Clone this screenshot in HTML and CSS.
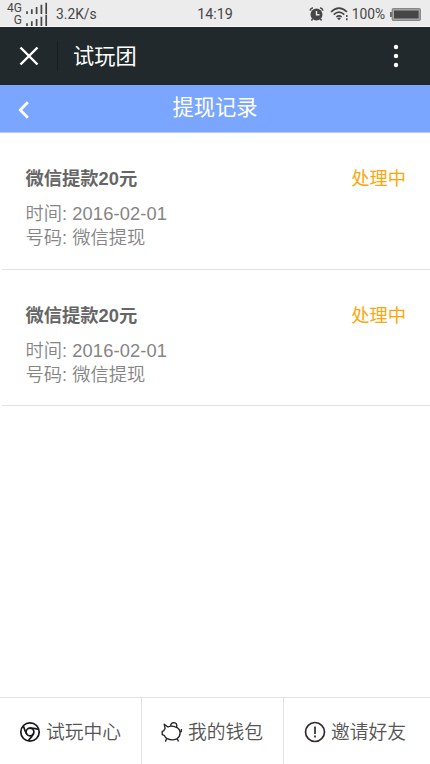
FILE: index.html
```html
<!DOCTYPE html>
<html lang="zh-CN">
<head>
<meta charset="utf-8">
<title>提现记录</title>
<link rel="stylesheet" href="styles.css">
</head>
<body>
<div class="screen">
  <div class="status">
    <div class="status-left">
      <div class="networks">
        <div class="network"><span>4G</span><svg width="22" height="12" viewBox="0 0 22 12"><path d="M1 12V9.2M5.8 12V7.2M10.6 12V5M15.4 12V2.8M20.2 12V.8"/></svg></div>
        <div class="network"><span>G</span><svg width="22" height="12" viewBox="0 0 22 12"><path d="M1 12V9.2M5.8 12V7.2M10.6 12V5M15.4 12V2.8M20.2 12V.8"/></svg></div>
      </div>
      <span class="speed">3.2K/s</span>
    </div>
    <span class="clock">14:19</span>
    <div class="status-right">
      <svg class="alarm" width="15" height="14" viewBox="0 0 15 14"><circle cx="7.5" cy="7.4" r="6" fill="#464646"/><path d="M1 3.6Q1.5 1.4 3.9.8M14 3.6Q13.5 1.4 11.1.8M3.6 12L2.4 13.5M11.4 12l1.2 1.5" fill="none" stroke="#464646" stroke-width="1.5"/><path d="M7.5 4v3.8h3" fill="none" stroke="#ececec" stroke-width="1.4"/></svg>
      <svg class="wifi" width="19" height="14" viewBox="0 0 19 14"><g fill="none" stroke="#464646" stroke-width="1.6"><path d="M1 5Q9 -2.7 17 5"/><path d="M3.7 7.6Q9 2.5 14.3 7.6"/><path d="M6.3 10Q9 7.6 11.7 10"/></g><path d="M7 11.1Q9 9.8 11 11.1L9 13.3z" fill="#464646"/><path d="M16.8 8v2M16.8 11.2v2" stroke="#464646" stroke-width="1.5"/></svg>
      <span class="percent">100%</span>
      <svg class="battery" width="31" height="13" viewBox="0 0 31 13"><rect x="0" y="4" width="2" height="5" fill="#666"/><rect x="2.3" y=".7" width="28" height="11.6" rx="1.2" fill="#aaa" stroke="#888" stroke-width="1.3"/><rect x="4" y="2.5" width="24.6" height="8" fill="#464646"/></svg>
    </div>
  </div>
  <header class="appbar">
    <svg class="close" width="20" height="20" viewBox="0 0 20 20"><path d="M1.5 1.5l17 17M18.5 1.5l-17 17"/></svg>
    <i class="divider"></i>
    <span class="app-name">试玩团</span>
    <svg class="more" width="6" height="24" viewBox="0 0 6 24"><circle cx="3" cy="3" r="2.2"/><circle cx="3" cy="12" r="2.2"/><circle cx="3" cy="21" r="2.2"/></svg>
  </header>
  <div class="pagebar">
    <svg class="back" width="12" height="18" viewBox="0 0 12 18"><path d="M9.8 1.3L2.3 9l7.5 7.7"/></svg>
    <h1>提现记录</h1>
  </div>
  <main class="records">
    <section class="record">
      <div class="record-head"><h2>微信提款20元</h2><span class="state">处理中</span></div>
      <p>时间: <span class="date">2016-02-01</span></p>
      <p>号码: 微信提现</p>
    </section>
    <section class="record">
      <div class="record-head"><h2>微信提款20元</h2><span class="state">处理中</span></div>
      <p>时间: <span class="date">2016-02-01</span></p>
      <p>号码: 微信提现</p>
    </section>
  </main>
  <nav class="tabs">
    <a class="tab"><svg width="22" height="22" viewBox="0 0 22 22" fill="none" stroke="#161616" stroke-width="1.7"><circle cx="11" cy="11" r="9.2"/><circle cx="11" cy="11" r="3.9"/><path d="M10.5 7.1Q15 7.1 19.2 8.2"/><path d="M10.5 7.1Q15 7.1 19.2 8.2" transform="rotate(120 11 11)"/><path d="M10.5 7.1Q15 7.1 19.2 8.2" transform="rotate(240 11 11)"/></svg><span>试玩中心</span></a>
    <a class="tab"><svg width="22" height="22" viewBox="0 0 22 22" fill="none" stroke="#252525" stroke-width="1.35" stroke-linejoin="round"><path d="M10 5.2Q8.5 5.3 7 6L3.2 3.2L4.1 7.4Q3.2 8.6 2.8 9.9L1.2 10.4V13.6L3.2 14.3Q4 16.3 6.2 17.7Q11 19.9 15.8 17.8Q19.1 15.7 19.1 12Q18.9 8 15.4 6.2M9.8 5.2Q12.3 5 15.4 6.3M9.7 5.1Q9.7 1.6 13 1.6Q16.4 1.8 15.7 6.2M19 11.4Q20.8 10.5 20.5 8M5.8 17.3L4.3 20.6M16.2 17.4L17.5 20.6"/></svg><span>我的钱包</span></a>
    <a class="tab"><svg width="22" height="22" viewBox="0 0 22 22" fill="none" stroke="#332b2b" stroke-width="1.7"><circle cx="11" cy="11" r="9.5"/><path d="M11 5.5v7.4M11 14.5v2"/></svg><span>邀请好友</span></a>
  </nav>
</div>
</body>
</html>
```
FILE: styles.css
```css
* { box-sizing: border-box; }
body { margin: 0; background: #fff; font-family: "Liberation Sans", "Noto Sans CJK SC", sans-serif; }
h1, h2, p { margin: 0; font-weight: inherit; }
svg { display: block; flex: none; }
.screen { width: 430px; height: 764px; display: flex; flex-direction: column; overflow: hidden; }

.status { height: 27px; flex: none; display: grid; grid-template-columns: 1fr auto 1fr; align-items: center; background: #ececec; color: #464646; font-family: Roboto, sans-serif; font-size: 14px; line-height: 26px; padding: 1px 9px 0 6px; border-bottom: 1px solid #f5f5f5; }
.status-left { display: flex; align-items: center; gap: 8px; }
.networks { width: 42px; }
.network { height: 12.5px; display: flex; justify-content: flex-end; align-items: center; gap: 4px; font-size: 12px; line-height: 12px; }
.network path { stroke: #464646; stroke-width: 1.7; }
.speed { font-size: 13.8px; }
.clock { font-size: 14.3px; padding-left: 3px; }
.status-right { display: flex; align-items: center; justify-content: flex-end; }
.wifi { margin-left: 6px; }
.percent { margin: 0 5px 0 3px; font-size: 13.8px; }

.appbar { height: 58px; flex: none; display: flex; align-items: center; padding: 0 31px 0 19px; background: #22292c; color: #fff; }
.close path { stroke: #fff; stroke-width: 2.4; }
.divider { width: 1px; height: 30px; margin-left: 18px; background: #171d20; }
.app-name { margin: 2px 0 0 15px; font-size: 21.2px; line-height: 30px; }
.more { margin-left: auto; fill: #fff; }

.pagebar { height: 48px; flex: none; display: grid; grid-template-columns: 40px 1fr 40px; align-items: center; background: #7ba6ff; color: #fff; border-bottom: 1px solid #b6ccfb; }
.back { margin: 2px 0 0 18px; }
.back path { fill: none; stroke: #fff; stroke-width: 2.8; }
.pagebar h1 { text-align: center; font-size: 21.3px; font-weight: 400; line-height: 30px; padding-bottom: 1px; }

.records { flex: 1; padding-left: 2px; }
.record { height: 136.5px; padding: 32px 24px 0 23.5px; border-bottom: 1px solid #e2e2e2; color: #858585; font-size: 18.3px; font-weight: 350; line-height: 24px; }
.record-head { display: flex; justify-content: space-between; height: 37px; line-height: 28px; }
.record h2 { font-size: 18.3px; font-weight: 700; color: #666; }
.state { color: #ffa50a; font-size: 18.3px; font-weight: 400; }
.date { letter-spacing: .13px; }

.tabs { height: 67px; flex: none; display: grid; grid-template-columns: 142px 142px 146px; border-top: 1px solid #e2e2e2; }
.tab { display: flex; align-items: center; gap: 5px; padding: 0 0 0 19px; color: #555; font-size: 18.8px; font-weight: 350; border-right: 1px solid #e2e2e2; }
.tab svg { margin-top: 1px; }
.tab span { padding-bottom: 2px; }
.tab:last-child { border-right: 0; padding-left: 20px; }
```
